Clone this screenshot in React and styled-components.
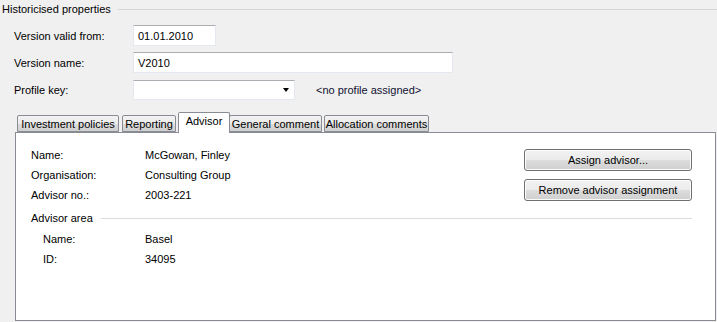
import React from 'react';
import styled, { createGlobalStyle } from 'styled-components';

const GlobalStyle = createGlobalStyle`
  html, body {
    margin: 0;
    padding: 0;
    background: #f0f0f0;
  }
  body {
    font-family: "Liberation Sans", Arial, sans-serif;
    font-size: 11px;
    color: #000;
  }
`;

const Window = styled.div`
  width: 717px;
  height: 322px;
  overflow: hidden;
  background: #f0f0f0;
`;

const GroupHeader = styled.div`
  display: flex;
  align-items: center;
  height: 18px;
  padding-left: ${(p) => p.$indent ?? 2}px;
  margin-top: ${(p) => p.$top || 0}px;
`;

const GroupTitle = styled.span`
  white-space: nowrap;
  margin-right: ${(p) => p.$gap || 7}px;
`;

const GroupLine = styled.div`
  flex: 1;
  height: 1px;
  background: ${(p) => p.$color || '#d5d5d5'};
`;

const Form = styled.div`
  display: grid;
  grid-template-columns: 119px auto;
  grid-auto-rows: 21px;
  row-gap: 6px;
  align-items: center;
  justify-content: start;
  padding-left: 14px;
  margin-top: 7px;
`;

const Label = styled.span`
  white-space: nowrap;
`;

const TextBox = styled.div`
  box-sizing: border-box;
  width: ${(p) => p.$width}px;
  height: 21px;
  background: #fff;
  border: 1px solid #e3e9ef;
  border-top-color: #abadb3;
  padding: 0 4px;
  display: flex;
  align-items: center;
`;

const FieldRow = styled.div`
  display: flex;
  align-items: center;
  height: 21px;
`;

const Select = styled.div`
  box-sizing: border-box;
  width: 162px;
  height: 20px;
  margin-top: 1px;
  background: #fff;
  border: 1px solid #e3e9ef;
  border-top-color: #abadb3;
  display: flex;
  align-items: center;
  justify-content: flex-end;
  padding-right: 5px;
`;

const Arrow = styled.div`
  width: 0;
  height: 0;
  border-left: 3.5px solid transparent;
  border-right: 3.5px solid transparent;
  border-top: 4px solid #000;
`;

const Hint = styled.span`
  margin-left: 21px;
  margin-top: 1px;
  color: #101030;
  white-space: nowrap;
`;

const TabArea = styled.div`
  margin: 12px 1px 0 15px;
`;

const TabStrip = styled.div`
  display: flex;
  align-items: flex-end;
  height: 20px;
  position: relative;
  z-index: 1;
`;

const Tab = styled.div`
  box-sizing: border-box;
  width: ${(p) => p.$width}px;
  margin-left: ${(p) => p.$ml}px;
  height: ${(p) => (p.$active ? 21 : 17)}px;
  margin-bottom: ${(p) => (p.$active ? -1 : 0)}px;
  border: 1px solid #898c95;
  border-bottom: ${(p) => (p.$active ? 'none' : '1px solid #898c95')};
  background: ${(p) =>
    p.$active ? '#fff' : 'linear-gradient(#f2f2f2, #ebebeb 50%, #dddddd 51%, #cfcfcf)'};
  display: flex;
  justify-content: center;
  align-items: ${(p) => (p.$active ? 'flex-start' : 'center')};
  padding-top: ${(p) => (p.$active ? 2 : 1)}px;
  white-space: nowrap;
  border-radius: 2px 2px 0 0;
`;

const Panel = styled.div`
  box-sizing: border-box;
  height: 189px;
  background: #fff;
  border: 1px solid #898c95;
  padding: 12px 23px 0 15px;
`;

const TopSection = styled.div`
  display: flex;
  justify-content: space-between;
`;

const InfoGrid = styled.div`
  display: grid;
  grid-template-columns: ${(p) => 114 - (p.$indent || 0)}px auto;
  grid-auto-rows: 20px;
  align-items: center;
  padding-left: ${(p) => p.$indent || 0}px;
  margin-top: ${(p) => p.$top || 0}px;
`;

const Buttons = styled.div`
  display: flex;
  flex-direction: column;
  gap: 8px;
  padding-top: 4px;
`;

const Button = styled.div`
  box-sizing: border-box;
  width: 168px;
  height: 22px;
  border: 1px solid #707070;
  border-radius: 3px;
  background: linear-gradient(#f2f2f2, #ebebeb 50%, #dddddd 51%, #cfcfcf);
  box-shadow: inset 0 0 0 1px #fcfcfc;
  display: flex;
  align-items: center;
  justify-content: center;
  white-space: nowrap;
`;

const tabs = [
  { label: 'Investment policies', width: 102, ml: 2 },
  { label: 'Reporting', width: 54, ml: 3 },
  { label: 'Advisor', width: 52, ml: 2, active: true },
  { label: 'General comment', width: 93, ml: -1 },
  { label: 'Allocation comments', width: 105, ml: 2 },
];

export default function App() {
  return (
    <Window>
      <GlobalStyle />
      <GroupHeader>
        <GroupTitle>Historicised properties</GroupTitle>
        <GroupLine />
      </GroupHeader>
      <Form>
        <Label>Version valid from:</Label>
        <TextBox $width={83}>01.01.2010</TextBox>
        <Label>Version name:</Label>
        <TextBox $width={320}>V2010</TextBox>
        <Label>Profile key:</Label>
        <FieldRow>
          <Select>
            <Arrow />
          </Select>
          <Hint>&lt;no profile assigned&gt;</Hint>
        </FieldRow>
      </Form>
      <TabArea>
        <TabStrip>
          {tabs.map((t) => (
            <Tab key={t.label} $width={t.width} $ml={t.ml} $active={t.active}>
              {t.label}
            </Tab>
          ))}
        </TabStrip>
        <Panel>
          <TopSection>
            <InfoGrid>
              <Label>Name:</Label>
              <span>McGowan, Finley</span>
              <Label>Organisation:</Label>
              <span>Consulting Group</span>
              <Label>Advisor no.:</Label>
              <span>2003-221</span>
            </InfoGrid>
            <Buttons>
              <Button>Assign advisor...</Button>
              <Button>Remove advisor assignment</Button>
            </Buttons>
          </TopSection>
          <GroupHeader $indent={0} $top={4}>
            <GroupTitle $gap={8}>Advisor area</GroupTitle>
            <GroupLine $color="#dcdcdc" />
          </GroupHeader>
          <InfoGrid $indent={12} $top={2}>
            <Label>Name:</Label>
            <span>Basel</span>
            <Label>ID:</Label>
            <span>34095</span>
          </InfoGrid>
        </Panel>
      </TabArea>
    </Window>
  );
}
